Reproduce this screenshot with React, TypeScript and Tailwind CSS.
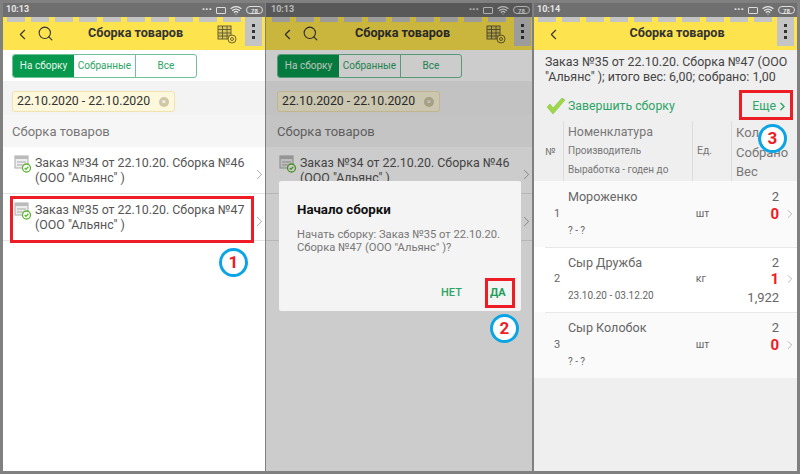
import { ChevronLeft, ChevronRight, Search, Wifi } from "lucide-react";

const notches = [0, 1, 2, 3, 4, 5, 6, 7, 8, 9];

function OrderIcon() {
  return (
    <svg width="18" height="18" viewBox="0 0 18 18" className="shrink-0">
      <rect x="1" y="1" width="13" height="12" fill="#eee" stroke="#aaa" />
      <rect x="1" y="1" width="13" height="3" fill="#bbb" />
      <path d="M3 7h9M3 10h9" stroke="#aaa" />
      <circle cx="12.5" cy="13" r="4" fill="#fff" stroke="#5cb531" strokeWidth="1.3" />
      <path d="M10.7 13l1.3 1.4 2.3-2.6" fill="none" stroke="#5cb531" strokeWidth="1.3" />
    </svg>
  );
}

function TableIcon() {
  return (
    <svg width="20" height="20" viewBox="0 0 20 20" fill="none" stroke="#6a6132" strokeWidth="1">
      <rect x="1" y="2" width="13" height="13" fill="#d8c95a" />
      <path d="M1 5.5h13M1 9h13M1 12h13M5.5 2v13M10 2v13" />
      <circle cx="15" cy="15" r="4" fill="#ffe44f" />
      <circle cx="15" cy="15" r="1.5" />
    </svg>
  );
}

function StatusBar({ time, shifted }: { time: string; shifted?: boolean }) {
  return (
    <div className={`flex h-[14px] shrink-0 items-center bg-[#6f6f6f] pr-[2px] text-[9px] font-bold text-[#e6e6e6] ${shifted ? "pl-[5px]" : "pl-[3px]"}`}>
      <span>{time}</span>
      <span className="ml-auto flex items-center gap-[4px]">
        <span className="text-[8px] leading-none tracking-[0.5px]">•••</span>
        <span className="h-[7px] w-[10px] rounded-[1px] border border-[#ddd]" />
        <Wifi size={12} strokeWidth={2.5} />
        <span className="flex h-[8px] w-[17px] items-center justify-center rounded-full border border-[#ddd] text-[6px]">78</span>
      </span>
    </div>
  );
}

function Header({ tools, shifted }: { tools: boolean; shifted?: boolean }) {
  return (
    <div className="relative flex h-[33px] shrink-0 items-center bg-[#fde34d]">
      <div className={`absolute top-0 flex gap-[6px] ${shifted ? "left-[6px]" : "left-[4px]"}`}>
        {notches.map((n) => (
          <div key={n} className="h-[5px] w-[18px] bg-[#c4c4c4]" />
        ))}
      </div>
      <ChevronLeft size={17} strokeWidth={1.5} className={`mt-[1px] text-[#333] ${shifted ? "ml-[13px]" : "ml-[11px]"}`} />
      {tools ? <Search size={17} strokeWidth={1.5} className="ml-[6px] text-[#333]" /> : <span className="w-[23px]" />}
      <div className="flex-1 text-center text-[12.6px] font-bold text-[#333]">Сборка товаров</div>
      {tools ? <TableIcon /> : null}
      <div className={`ml-[8px] flex h-[29px] w-[17px] flex-col items-center justify-center gap-[3px] self-start bg-[#c4c4c4] ${shifted ? "mr-[1px]" : "mr-[3px]"}`}>
        <span className="h-[3px] w-[3px] bg-[#333]" />
        <span className="h-[3px] w-[3px] bg-[#333]" />
        <span className="h-[3px] w-[3px] bg-[#333]" />
      </div>
    </div>
  );
}

function Badge({ n, className }: { n: number; className: string }) {
  return (
    <div className={`absolute flex h-[29px] w-[29px] items-center justify-center rounded-full border-[3px] border-[#0ba4e4] bg-white text-[17px] font-bold text-[#ee1c25] ${className}`}>
      {n}
    </div>
  );
}

function OrderRow({ text, shifted }: { text: string; shifted?: boolean }) {
  return (
    <div className={`flex h-[47px] items-start border-b border-[#e4e4e4] bg-white pt-[8px] ${shifted ? "pl-[13px]" : "pl-[11px]"}`}>
      <OrderIcon />
      <div className="ml-[3px] whitespace-nowrap text-[12.4px] leading-[15px] text-[#555]">
        {text}
        <br />
        (ООО "Альянс" )
      </div>
      <ChevronRight size={17} strokeWidth={1} className="-mr-[3px] ml-auto self-center text-[#888]" />
    </div>
  );
}

function OrdersPanel({ dimmed }: { dimmed: boolean }) {
  const inset = dimmed ? "pl-[11px]" : "pl-[9px]";
  return (
    <div className="relative flex h-full flex-1 flex-col overflow-hidden bg-white">
      <StatusBar time="10:13" shifted={dimmed} />
      <Header tools shifted={dimmed} />
      <div className={`flex h-[31px] shrink-0 items-center bg-white ${inset}`}>
        <div className="flex h-[24px] w-[185px] overflow-hidden rounded-[3px] border border-[#6fc197] text-[10px] text-[#2ca566]">
          <div className="flex w-[61px] items-center justify-center bg-[#07994e] text-[#e6f5ec]">На сборку</div>
          <div className="flex w-[62px] items-center justify-center border-r border-[#6fc197]">Собранные</div>
          <div className="flex flex-1 items-center justify-center">Все</div>
        </div>
      </div>
      <div className={`h-[34px] shrink-0 bg-[#f3f3f3] pt-[10px] ${inset}`}>
        <div className="flex h-[21px] w-[163px] items-center justify-between rounded-[3px] border border-[#f1e3b0] bg-[#fdf8dc] pl-[4px] pr-[5px] text-[12.3px] text-[#333]">
          <span className="whitespace-nowrap">22.10.2020 - 22.10.2020</span>
          <span className="flex h-[10px] w-[10px] items-center justify-center rounded-full bg-[#cfc7a5] text-[8px] leading-none text-white">×</span>
        </div>
      </div>
      <div className={`flex h-[32px] shrink-0 items-center bg-[#f6f6f6] pt-[2px] text-[13px] text-[#777] ${inset}`}>Сборка товаров</div>
      <OrderRow text="Заказ №34 от 22.10.20. Сборка №46" shifted={dimmed} />
      <OrderRow text="Заказ №35 от 22.10.20. Сборка №47" shifted={dimmed} />
      {dimmed ? (
        <>
          <div className="absolute inset-0 bg-black/20" />
          <div className="absolute left-[13px] top-[178px] h-[130px] w-[242px] rounded-[2px] bg-[#f4f4f4]">
            <div className="pl-[18px] pt-[19px] text-[13.3px] font-bold text-[#111]">Начало сборки</div>
            <div className="pl-[18px] pt-[8px] text-[11.2px] leading-[13px] text-[#777]">
              Начать сборку: Заказ №35 от 22.10.20.
              <br />
              Сборка №47 (ООО "Альянс" )?
            </div>
            <div className="absolute left-[162px] top-[104px] text-[11px] font-medium text-[#2ca566]">НЕТ</div>
            <div className="absolute left-[211px] top-[104px] text-[11px] font-bold text-[#1f9e5a]">ДА</div>
          </div>
          <div className="absolute left-[219px] top-[275px] h-[30px] w-[30px] border-[3px] border-[#ee1c25]" />
          <Badge n={2} className="left-[224px] top-[311px]" />
        </>
      ) : (
        <>
          <div className="absolute left-[7px] top-[193px] h-[47px] w-[244px] border-[3px] border-[#ee1c25]" />
          <Badge n={1} className="left-[216px] top-[245px]" />
        </>
      )}
    </div>
  );
}

const items = [
  { n: 1, name: "Мороженко", unit: "шт", date: "? - ?", plan: "2", done: "0", weight: "" },
  { n: 2, name: "Сыр Дружба", unit: "кг", date: "23.10.20 - 03.12.20", plan: "2", done: "1", weight: "1,922" },
  { n: 3, name: "Сыр Колобок", unit: "шт", date: "? - ?", plan: "2", done: "0", weight: "" },
];

function ItemRow({ item, odd }: { item: (typeof items)[number]; odd: boolean }) {
  return (
    <div className={`relative flex h-[65.5px] items-center text-[#666] ${odd ? "bg-[#fafafa]" : "bg-white"}`}>
      {item.n > 1 ? <div className="absolute left-[11px] right-0 top-0 h-px bg-[#e8e8e8]" /> : null}
      <div className="w-[30px] pl-[20px] text-[11px]">{item.n}</div>
      <div className="flex h-full w-[129px] flex-col justify-between py-[8px] pl-[4px]">
        <div className="text-[12.6px] leading-[16px]">{item.name}</div>
        <div className="text-[10px] leading-[16px]">{item.date}</div>
      </div>
      <div className="w-[39px] pl-[4px] text-[10.5px]">{item.unit}</div>
      <div className="flex h-full w-[49px] flex-col items-end pt-[7px] text-[13px] leading-[17.5px]">
        <div>{item.plan}</div>
        <div className="text-[15px] font-bold text-[#ee1c25]">{item.done}</div>
        <div>{item.weight}</div>
      </div>
      <ChevronRight size={14} strokeWidth={1} className="ml-[4px] text-[#888]" />
    </div>
  );
}

function AssemblyPanel() {
  return (
    <div className="relative flex h-full flex-1 flex-col overflow-hidden bg-[#efefef]">
      <StatusBar time="10:14" />
      <Header tools={false} />
      <div className="h-[41px] shrink-0 whitespace-nowrap pl-[11px] pt-[4px] text-[12.4px] leading-[15px] text-[#444]">
        Заказ №35 от 22.10.20. Сборка №47 (ООО
        <br />
        "Альянс" ); итого вес: 6,00; собрано: 1,00
      </div>
      <div className="flex h-[30px] shrink-0 items-center pl-[12px] text-[12.3px] text-[#2ca566]">
        <svg width="20" height="18" viewBox="0 0 20 18">
          <path d="M1 10l3-3 3 4 9-10 3 2-12 14z" fill="#9ed84a" stroke="#7cbb30" strokeWidth="0.5" />
        </svg>
        <span className="ml-[2px]">Завершить сборку</span>
        <span className="ml-auto flex items-center pr-[8px]">
          Еще
          <ChevronRight size={13} strokeWidth={2.5} />
        </span>
      </div>
      <div className="flex h-[60px] shrink-0 text-[#777]">
        <div className="flex w-[30px] items-center border-r border-[#dcdcdc] pl-[11px] text-[10px]">№</div>
        <div className="flex w-[129px] flex-col gap-[4px] border-r border-[#dcdcdc] pl-[4px] pt-[3px] text-[10px] leading-[15px]">
          <span className="text-[12.4px]">Номенклатура</span>
          <span>Производитель</span>
          <span>Выработка - годен до</span>
        </div>
        <div className="flex w-[39px] items-center border-r border-[#dcdcdc] pl-[4px] text-[10.5px]">Ед.</div>
        <div className="flex flex-col pl-[4px] pt-[2px] text-[13px] leading-[19.5px]">
          <span>Кол-во</span>
          <span>Собрано</span>
          <span>Вес</span>
        </div>
      </div>
      {items.map((item) => (
        <ItemRow key={item.n} item={item} odd={item.n % 2 === 1} />
      ))}
      <div className="absolute left-[205px] top-[87px] h-[30px] w-[54px] border-[3px] border-[#ee1c25]" />
      <Badge n={3} className="left-[224px] top-[121px]" />
    </div>
  );
}

export default function App() {
  return (
    <div className="flex h-[474px] w-[800px] gap-[1px] bg-[#808080] pb-[3px] pl-[3px] pr-[3px] pt-[3px] font-['Roboto',sans-serif]">
      <div className="h-full w-[262px]">
        <OrdersPanel dimmed={false} />
      </div>
      <div className="h-full w-[266px]">
        <OrdersPanel dimmed />
      </div>
      <div className="ml-[1px] h-full w-[263px]">
        <AssemblyPanel />
      </div>
    </div>
  );
}
